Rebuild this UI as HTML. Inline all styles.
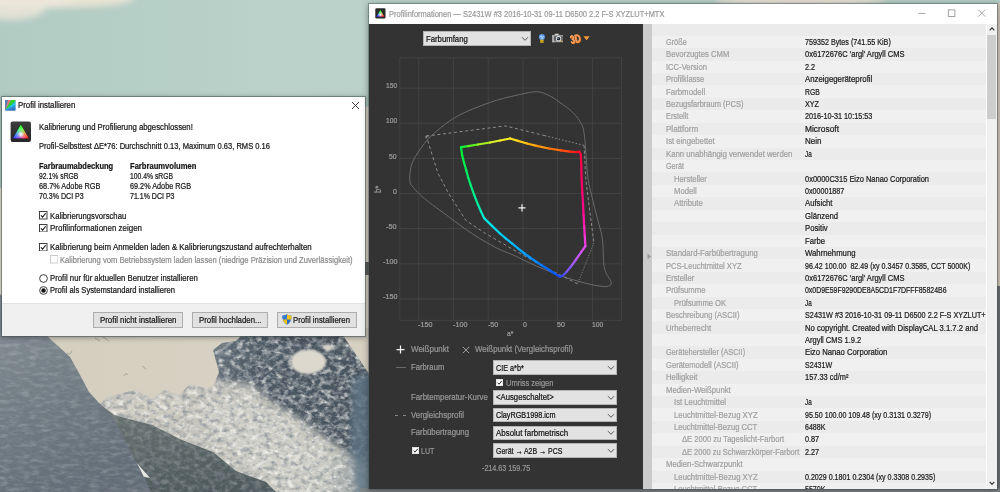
<!DOCTYPE html>
<html lang="de"><head><meta charset="utf-8"><title>Profilinformationen</title>
<style>
html,body{margin:0;padding:0}
body{width:1000px;height:492px;overflow:hidden;position:relative;background:#b4cdc5;font-family:"Liberation Sans", sans-serif;font-size:8.5px}
.a{position:absolute}
.t{position:absolute;white-space:pre;line-height:12px;height:12px;transform-origin:0 0;display:block;-webkit-text-stroke:0.22px currentColor}
svg{position:absolute;display:block}
</style></head><body>
<svg width="1000" height="492" viewBox="0 0 1000 492" style="left:0;top:0">
<defs>
<linearGradient id="sky" x1="0" y1="0" x2="1" y2="0">
 <stop offset="0" stop-color="#b1cbc3"/><stop offset="0.28" stop-color="#bad2c9"/><stop offset="1" stop-color="#b4ccc5"/>
</linearGradient>
<linearGradient id="slope" x1="0" y1="0" x2="0.35" y2="1">
 <stop offset="0" stop-color="#8a939a"/><stop offset="0.45" stop-color="#747f87"/><stop offset="1" stop-color="#626d77"/>
</linearGradient>
<linearGradient id="snow" x1="0" y1="0" x2="1" y2="0">
 <stop offset="0" stop-color="#d3cdbe"/><stop offset="0.5" stop-color="#dcd7c9"/><stop offset="1" stop-color="#dbd5c6"/>
</linearGradient>
<linearGradient id="dmass" x1="0" y1="0" x2="1" y2="0.3">
 <stop offset="0" stop-color="#6d7880"/><stop offset="0.3" stop-color="#4e5a65"/><stop offset="1" stop-color="#45515c"/>
</linearGradient>
<linearGradient id="lows" x1="0" y1="0" x2="0.3" y2="1">
 <stop offset="0" stop-color="#6d7775"/><stop offset="1" stop-color="#4e5a5c"/>
</linearGradient>
<filter id="b1" x="-10%" y="-10%" width="120%" height="120%"><feGaussianBlur stdDeviation="1"/></filter>
<filter id="b2" x="-10%" y="-10%" width="120%" height="120%"><feGaussianBlur stdDeviation="2"/></filter>
<filter id="b3" x="-20%" y="-20%" width="140%" height="140%"><feGaussianBlur stdDeviation="3"/></filter>
<filter id="b6" x="-30%" y="-30%" width="160%" height="160%"><feGaussianBlur stdDeviation="5"/></filter>
<filter id="rockl" x="0" y="0" width="100%" height="100%">
 <feTurbulence type="fractalNoise" baseFrequency="0.16 0.2" numOctaves="3" seed="7" result="n"/>
 <feColorMatrix in="n" type="matrix" values="0 0 0 0 0.93  0 0 0 0 0.92  0 0 0 0 0.88  2.6 0 0 0 -1.15"/>
</filter>
<filter id="rockd" x="0" y="0" width="100%" height="100%">
 <feTurbulence type="fractalNoise" baseFrequency="0.17 0.21" numOctaves="3" seed="3" result="n"/>
 <feColorMatrix in="n" type="matrix" values="0 0 0 0 0.26  0 0 0 0 0.29  0 0 0 0 0.32  0 2.6 0 0 -1.2"/>
</filter>
<filter id="grain" x="0" y="0" width="100%" height="100%">
 <feTurbulence type="fractalNoise" baseFrequency="0.12 0.3" numOctaves="3" seed="11" result="n"/>
 <feColorMatrix in="n" type="matrix" values="0 0 0 0 0.3  0 0 0 0 0.33  0 0 0 0 0.36  0 0 2.2 0 -0.95"/>
</filter>
<filter id="grainl" x="0" y="0" width="100%" height="100%">
 <feTurbulence type="fractalNoise" baseFrequency="0.1 0.25" numOctaves="3" seed="23" result="n"/>
 <feColorMatrix in="n" type="matrix" values="0 0 0 0 0.72  0 0 0 0 0.76  0 0 0 0 0.78  0 2.2 0 0 -0.98"/>
</filter>
<clipPath id="cRock"><path d="M99,404 L108,397 L122,393 L137,390 L152,399 L164,390 L179,395 L190,384 L205,388 L213,386 L219,372 L213,350 L222,343 L236,341 L243,334 L342,334 L372,378 L372,494 L278,494 L266,482 L236,471 L213,452 L182,440 L152,425 L114,415 Z"/></clipPath>
<clipPath id="cSlope"><path d="M0,294 L12,306 L47,336 L58,346 L70,357 L80,375 L89,392 L100,404 L114,419 L125,440 L141,471 L152,494 L0,494 Z"/></clipPath>
<clipPath id="cLow"><path d="M92,398 L114,415 L152,425 L182,440 L213,452 L236,471 L266,482 L278,494 L140,494 L130,471 L116,440 L104,419 Z"/></clipPath>
</defs>
<rect x="0" y="0" width="1000" height="340" fill="url(#sky)"/>
<!-- clouds along the top -->
<g filter="url(#b3)">
 <ellipse cx="40" cy="-2" rx="95" ry="10" fill="#ece6d9"/>
 <ellipse cx="12" cy="7" rx="34" ry="13" fill="#ebe5d8" opacity="0.85"/>
 <ellipse cx="95" cy="2" rx="30" ry="5" fill="#e6e0d2" opacity="0.7"/>
 <ellipse cx="800" cy="0" rx="85" ry="7" fill="#e6e0d3"/>
</g>
<rect x="996" y="3" width="4" height="284" fill="#cfc8b9"/>
<!-- snow field (mostly hidden behind the dialog) -->
<path d="M0,188 L120,150 L370,106 L370,340 L0,340 Z" fill="#e9e3d5"/>
<rect x="365" y="262" width="5" height="13" fill="#62625f"/>
<rect x="0" y="328" width="1000" height="166" fill="url(#snow)"/>
<g stroke="#8b8a80" stroke-width="0.8" fill="none" opacity="0.8"><path d="M95,338 l5,3 M103,337 l6,4 M67,353 q3,3 5,-2 M124,376 q2,-4 4,-1 M142,366 l4,3"/></g>
<!-- right big rock mass -->
<g clip-path="url(#cRock)">
 <rect x="90" y="330" width="290" height="170" fill="#c6c5bd"/>
 <g filter="url(#b3)">
  <path d="M210,349 L236,330 L348,330 L376,374 L376,470 L333,443 L302,420 L270,401 L251,384 L217,381 Z" fill="url(#dmass)"/>
  <path d="M300,470 L340,455 L376,470 L376,496 L310,496 Z" fill="#9aa2a4" opacity="0.6"/>
  <ellipse cx="160" cy="408" rx="50" ry="8" fill="#cfccc1"/>
  <path d="M200,405 L250,398 L300,432 L340,470 L330,496 L290,496 L250,465 L215,440 Z" fill="#d0d0c9" opacity="0.8"/>
 </g>
 <rect x="90" y="330" width="290" height="170" filter="url(#rockl)" opacity="0.8"/>
 <rect x="90" y="330" width="290" height="170" filter="url(#rockd)" opacity="0.85"/>
 <path d="M352,378 L378,372 L378,496 L356,496 L350,440 Z" fill="#5f7484" opacity="0.8" filter="url(#b3)"/>
 <path d="M291,361 C291,353 300,350 309,350 C319,350 326,356 326,362 C326,369 317,374 307,374 C298,374 291,369 291,361 Z" fill="#dcd8cd" filter="url(#b1)"/>
 <path d="M322,346 l8,-2 l3,5 l-6,3 Z" fill="#d6d3c8" filter="url(#b1)"/>
</g>
<path d="M342,332 L374,332 L374,380 Z" fill="#d6d0c1" filter="url(#b1)"/>
<!-- lower dark rocky slope -->
<g clip-path="url(#cLow)">
 <rect x="90" y="395" width="200" height="100" fill="url(#lows)"/>
 <rect x="90" y="395" width="200" height="100" filter="url(#rockl)" opacity="0.22"/>
 <rect x="90" y="395" width="200" height="100" filter="url(#rockd)" opacity="0.55"/>
 <path d="M136,462 L150,478 L141,476 Z" fill="#e8e8e4"/>
</g>
<!-- left blue-grey slope -->
<g clip-path="url(#cSlope)">
 <rect x="0" y="290" width="160" height="208" fill="url(#slope)"/>
 <rect x="0" y="328" width="160" height="170" filter="url(#grain)" opacity="0.3"/>
 <rect x="0" y="328" width="160" height="170" filter="url(#grainl)" opacity="0.25"/>
</g>
<!-- far right strip of mountain + strip under the window -->
<rect x="996" y="286" width="4" height="206" fill="#6b7073"/>
<rect x="360" y="488" width="640" height="4" fill="#7d8587"/>
</svg>
<div class="a" style="left:2px;top:97px;width:363px;height:239px;background:#fff;box-shadow:0 0 0 1px rgba(70,85,88,.55),0 1px 5px 1px rgba(0,0,0,.33)"></div>
<div class="a" style="left:2px;top:303px;width:363px;height:33px;background:#f0f0f0;border-top:1px solid #e2e2e2;box-sizing:border-box"></div>
<svg width="11" height="11" viewBox="0 0 11 11" style="left:4.6px;top:99.8px">
<rect x="0" y="0" width="10.4" height="10.4" fill="#3a86c8"/>
<path d="M0,10.4 L0,0 L3.2,0 Z" fill="#5b7fae"/>
<path d="M0,10.4 L3.2,0 L6,0 Z" fill="#f07a7a"/>
<path d="M0,10.4 L6,0 L10.4,0 L10.4,1.5 Z" fill="#2fd12f"/>
<path d="M0,10.4 L10.4,1.5 L10.4,5.2 Z" fill="#22c3e6"/>
<path d="M0,10.4 L10.4,5.2 L10.4,8 Z" fill="#2a93dc"/>
<path d="M0,10.4 L10.4,8 L10.4,10.4 Z" fill="#2d6fb8"/>
</svg>
<span class="t" style="left:18.30px;top:98.85px;color:#111;font-size:8.5px;transform:scaleX(0.9186);">Profil installieren</span>
<svg width="9" height="9" viewBox="0 0 9 9" style="left:351px;top:100.7px"><path d="M1,1 L8,8 M8,1 L1,8" stroke="#222" stroke-width="0.9" fill="none"/></svg>
<svg width="22" height="22" viewBox="0 0 22 22" style="left:10px;top:121px">
<defs>
<radialGradient id="igR" gradientUnits="userSpaceOnUse" cx="19" cy="17.4" r="17"><stop offset="0" stop-color="#ff0000"/><stop offset="0.3" stop-color="#ff0000"/><stop offset="1" stop-color="#000"/></radialGradient>
<radialGradient id="igG" gradientUnits="userSpaceOnUse" cx="10.8" cy="3.6" r="17"><stop offset="0" stop-color="#00ff00"/><stop offset="0.3" stop-color="#00ff00"/><stop offset="1" stop-color="#000"/></radialGradient>
<radialGradient id="igB" gradientUnits="userSpaceOnUse" cx="2.8" cy="17.4" r="17"><stop offset="0" stop-color="#1020ff"/><stop offset="0.3" stop-color="#1020ff"/><stop offset="1" stop-color="#000"/></radialGradient>
<radialGradient id="igW"><stop offset="0" stop-color="#fff"/><stop offset="1" stop-color="#000"/></radialGradient>
<linearGradient id="ig0" x1="0" y1="0" x2="0" y2="1"><stop offset="0" stop-color="#3c3c3c"/><stop offset="1" stop-color="#262626"/></linearGradient>

</defs>
<rect x="0.6" y="0.4" width="20.4" height="20.6" rx="2.2" fill="url(#ig0)"/>
<g style="isolation:isolate">
<path d="M10.8,3.6 L19,17.4 L2.8,17.4 Z" fill="url(#igR)"/>
<path d="M10.8,3.6 L19,17.4 L2.8,17.4 Z" fill="url(#igG)" style="mix-blend-mode:screen"/>
<path d="M10.8,3.6 L19,17.4 L2.8,17.4 Z" fill="url(#igB)" style="mix-blend-mode:screen"/>
<circle cx="10.9" cy="13.4" r="3.4" fill="url(#igW)" style="mix-blend-mode:screen"/>
</g>
</svg>
<span class="t" style="left:39.20px;top:120.75px;color:#151515;font-size:8.5px;transform:scaleX(0.9117);">Kalibrierung und Profilierung abgeschlossen!</span>
<span class="t" style="left:39.20px;top:139.65px;color:#151515;font-size:8.5px;transform:scaleX(0.8890);">Profil-Selbsttest ΔE*76: Durchschnitt 0.13, Maximum 0.63, RMS 0.16</span>
<span class="t" style="left:39.20px;top:159.55px;color:#151515;font-size:8.5px;transform:scaleX(0.8825);font-weight:700;">Farbraumabdeckung</span>
<span class="t" style="left:129.70px;top:159.55px;color:#151515;font-size:8.5px;transform:scaleX(0.8941);font-weight:700;">Farbraumvolumen</span>
<span class="t" style="left:39.20px;top:169.65px;color:#151515;font-size:8.5px;transform:scaleX(0.8018);">92.1% sRGB</span>
<span class="t" style="left:129.70px;top:169.65px;color:#151515;font-size:8.5px;transform:scaleX(0.8000);">100.4% sRGB</span>
<span class="t" style="left:39.20px;top:179.65px;color:#151515;font-size:8.5px;transform:scaleX(0.8604);">68.7% Adobe RGB</span>
<span class="t" style="left:129.70px;top:179.65px;color:#151515;font-size:8.5px;transform:scaleX(0.8548);">69.2% Adobe RGB</span>
<span class="t" style="left:39.20px;top:189.65px;color:#151515;font-size:8.5px;transform:scaleX(0.8297);">70.3% DCI P3</span>
<span class="t" style="left:129.70px;top:189.65px;color:#151515;font-size:8.5px;transform:scaleX(0.8260);">71.1% DCI P3</span>
<svg width="8.5" height="8.5" viewBox="0 0 10 10" style="left:39.2px;top:211.4px"><rect x="0.6" y="0.6" width="8.8" height="8.8" fill="#fff" stroke="#333" stroke-width="1.1"/><path d="M2.2,5 L4.2,7.2 L7.9,2.6" fill="none" stroke="#111" stroke-width="1.25"/></svg>
<span class="t" style="left:49.80px;top:209.85px;color:#151515;font-size:8.5px;transform:scaleX(0.9060);">Kalibrierungsvorschau</span>
<svg width="8.5" height="8.5" viewBox="0 0 10 10" style="left:39.2px;top:223.7px"><rect x="0.6" y="0.6" width="8.8" height="8.8" fill="#fff" stroke="#333" stroke-width="1.1"/><path d="M2.2,5 L4.2,7.2 L7.9,2.6" fill="none" stroke="#111" stroke-width="1.25"/></svg>
<span class="t" style="left:49.80px;top:222.05px;color:#151515;font-size:8.5px;transform:scaleX(0.9361);">Profilinformationen zeigen</span>
<svg width="8.5" height="8.5" viewBox="0 0 10 10" style="left:39.2px;top:242.5px"><rect x="0.6" y="0.6" width="8.8" height="8.8" fill="#fff" stroke="#333" stroke-width="1.1"/><path d="M2.2,5 L4.2,7.2 L7.9,2.6" fill="none" stroke="#111" stroke-width="1.25"/></svg>
<span class="t" style="left:49.80px;top:241.15px;color:#151515;font-size:8.5px;transform:scaleX(0.9246);">Kalibrierung beim Anmelden laden &amp; Kalibrierungszustand aufrechterhalten</span>
<svg width="8.5" height="8.5" viewBox="0 0 10 10" style="left:49.8px;top:255.1px"><rect x="0.6" y="0.6" width="8.8" height="8.8" fill="#fff" stroke="#c8c8c8" stroke-width="1.1"/></svg>
<span class="t" style="left:60.40px;top:253.55px;color:#8a8a8a;font-size:8.5px;transform:scaleX(0.8989);">Kalibrierung vom Betriebssystem laden lassen (niedrige Präzision und Zuverlässigkeit)</span>
<svg width="9" height="9" viewBox="0 0 10 10" style="left:39px;top:274.3px"><circle cx="5" cy="5" r="4.3" fill="#fff" stroke="#333" stroke-width="1.05"/></svg>
<span class="t" style="left:49.80px;top:271.85px;color:#151515;font-size:8.5px;transform:scaleX(0.9120);">Profil nur für aktuellen Benutzer installieren</span>
<svg width="9" height="9" viewBox="0 0 10 10" style="left:39px;top:286.4px"><circle cx="5" cy="5" r="4.3" fill="#fff" stroke="#333" stroke-width="1.05"/><circle cx="5" cy="5" r="2.5" fill="#111"/></svg>
<span class="t" style="left:49.80px;top:283.95px;color:#151515;font-size:8.5px;transform:scaleX(0.8969);">Profil als Systemstandard installieren</span>
<div class="a" style="left:93px;top:312px;width:90px;height:15.5px;background:#e1e1e1;border:1px solid #adadad;box-sizing:border-box"></div>
<span class="t" style="left:99.50px;top:313.65px;color:#151515;font-size:8.5px;transform:scaleX(0.9252);">Profil nicht installieren</span>
<div class="a" style="left:192px;top:312px;width:75.5px;height:15.5px;background:#e1e1e1;border:1px solid #adadad;box-sizing:border-box"></div>
<span class="t" style="left:198.50px;top:313.65px;color:#151515;font-size:8.5px;transform:scaleX(0.9185);">Profil hochladen...</span>
<div class="a" style="left:276.5px;top:312px;width:80px;height:15.5px;background:#e1e1e1;border:1px solid #adadad;box-sizing:border-box"></div>
<span class="t" style="left:293.00px;top:313.65px;color:#151515;font-size:8.5px;transform:scaleX(0.9138);">Profil installieren</span>
<svg width="10" height="11" viewBox="0 0 10 11" style="left:282px;top:314.4px">
<path d="M5,0.3 C3.6,1.3 2,1.7 0.4,1.7 C0.3,5.6 1.6,8.9 5,10.7 C8.4,8.9 9.7,5.6 9.6,1.7 C8,1.7 6.4,1.3 5,0.3 Z" fill="#2f6fc4"/>
<path d="M5,0.3 C3.6,1.3 2,1.7 0.4,1.7 C0.35,3.1 0.5,4.3 0.9,5.5 L5,5.5 Z" fill="#3a7bd0"/>
<path d="M5,0.3 C6.4,1.3 8,1.7 9.6,1.7 C9.65,3.1 9.5,4.3 9.1,5.5 L5,5.5 Z" fill="#f4c41c"/>
<path d="M0.9,5.5 C1.5,7.6 2.8,9.5 5,10.7 L5,5.5 Z" fill="#f4c41c"/>
</svg>
<div class="a" style="left:369px;top:4px;width:628px;height:485px;background:#fff;box-shadow:0 0 0 1px rgba(70,85,88,.45),0 1px 6px 1px rgba(0,0,0,.33)"></div>
<svg width="11" height="11" viewBox="0 0 22 22" style="left:374.6px;top:7.7px">
<rect x="0.6" y="0.4" width="20.4" height="20.6" rx="2.4" fill="#2a2a2a"/>
<g style="isolation:isolate">
<path d="M10.8,3.6 L19,17.4 L2.8,17.4 Z" fill="url(#igR)"/>
<path d="M10.8,3.6 L19,17.4 L2.8,17.4 Z" fill="url(#igG)" style="mix-blend-mode:screen"/>
<path d="M10.8,3.6 L19,17.4 L2.8,17.4 Z" fill="url(#igB)" style="mix-blend-mode:screen"/>
<circle cx="10.9" cy="13.4" r="3.4" fill="url(#igW)" style="mix-blend-mode:screen"/>
</g>
</svg>
<span class="t" style="left:388.80px;top:7.65px;color:#9a9a9a;font-size:8.5px;transform:scaleX(0.8790);">Profilinformationen — S2431W #3 2016-10-31 09-11 D6500 2.2 F-S XYZLUT+MTX</span>
<svg width="80" height="12" viewBox="0 0 80 12" style="left:915px;top:8px"><g stroke="#8a8a8a" stroke-width="0.8" fill="none"><path d="M3.6,5.4 L10.4,5.4"/><rect x="33.3" y="1.9" width="6.6" height="6.6"/><path d="M63.2,1.6 L70.2,8.6 M70.2,1.6 L63.2,8.6"/></g></svg>
<div class="a" style="left:369px;top:23.5px;width:274px;height:465.5px;background:#333"></div>
<div class="a" style="left:643px;top:23.5px;width:8.5px;height:465.5px;background:#cbcbcb"></div>
<svg width="5" height="7" viewBox="0 0 5 7" style="left:646.8px;top:253px"><path d="M0.5,0.5 L4,3.5 L0.5,6.5 Z" fill="#9a9a9a"/></svg>
<div class="a" style="left:423px;top:31.2px;width:108px;height:15px;background:#e2e2e2;border:1px solid #b4b4b4;box-sizing:border-box"></div><svg width="8" height="6" viewBox="0 0 8 6" style="left:520.8px;top:36.1px"><path d="M1,1.2 L4,4.3 L7,1.2" fill="none" stroke="#444" stroke-width="0.9"/></svg><span class="t" style="left:426.00px;top:32.65px;color:#111;font-size:8.5px;transform:scaleX(0.9110);">Farbumfang</span>
<svg width="8" height="11" viewBox="0 0 8 11" style="left:538px;top:33px">
<circle cx="3.9" cy="4.1" r="3.05" fill="#5b9bea"/>
<path d="M2.3,3.6 q0.8,-1.3 1.6,0 q0.8,1.3 1.6,0" fill="none" stroke="#f4faff" stroke-width="0.9"/>
<path d="M2.6,5.2 h2.6" stroke="#dcecff" stroke-width="0.7"/>
<rect x="2.2" y="6.7" width="3.4" height="3.1" fill="#dcb81e"/><rect x="2.2" y="7.9" width="3.4" height="0.6" fill="#8a6e10"/>
</svg>
<svg width="12" height="10" viewBox="0 0 12 10" style="left:552px;top:33.2px">
<path d="M0.3,2 H2.2 L3,0.6 H6.6 L7.4,2 H10.9 V9.3 H0.3 Z" fill="#9e9e9e"/>
<rect x="0.3" y="3.3" width="10.6" height="4.4" fill="#5e5e5e"/>
<rect x="0.3" y="2" width="1.6" height="7.3" fill="#b8b8b8"/>
<circle cx="6.6" cy="5.7" r="2.7" fill="#e6e6e6"/><circle cx="6.6" cy="5.7" r="1.8" fill="#222"/><circle cx="6.1" cy="5.2" r="0.75" fill="#5aa0ee"/>
<rect x="8.9" y="7.6" width="1.3" height="1.1" fill="#e0a020"/>
<rect x="3.4" y="1" width="2.8" height="0.8" fill="#ddd"/>
</svg>
<span class="t" style="left:571.6px;top:34px;color:#f5924a;font-size:11.5px;font-weight:700;transform:rotate(-13deg) scaleX(0.7);transform-origin:0 100%;text-shadow:-0.5px -0.5px 0 #ffc08a,0.5px 0.6px 0 #c65f14">3D</span>
<svg width="8" height="5" viewBox="0 0 8 5" style="left:583.1px;top:35.6px"><path d="M0.4,0.3 L6.8,0.3 L3.6,4.2 Z" fill="#f59a3c"/></svg>
<svg width="274" height="320" viewBox="369 23.5 274 320" style="left:369px;top:23.5px"><g stroke="#444444" stroke-width="0.9" fill="none"><rect x="399.8" y="57.3" width="221.7" height="262.5"/><path d="M418.7,57.3 V319.8"/><path d="M453.4,57.3 V319.8"/><path d="M488.2,57.3 V319.8"/><path d="M522.9,57.3 V319.8"/><path d="M557.6,57.3 V319.8"/><path d="M592.4,57.3 V319.8"/><path d="M399.8,87.6 H621.5"/><path d="M399.8,122.7 H621.5"/><path d="M399.8,157.9 H621.5"/><path d="M399.8,193.0 H621.5"/><path d="M399.8,228.1 H621.5"/><path d="M399.8,263.3 H621.5"/><path d="M399.8,298.4 H621.5"/></g><path d="M409.8,180.0 C409.6,175.9 409.8,168.6 412.2,162.4 C414.6,156.2 420.3,148.3 424.4,143.0 C428.5,137.7 431.7,134.9 436.6,130.7 C441.5,126.5 447.6,121.5 453.7,117.8 C459.8,114.1 465.9,111.3 473.2,108.3 C480.5,105.2 489.9,101.9 497.6,99.5 C505.3,97.1 513.0,95.5 519.5,94.1 C526.0,92.7 531.7,91.1 536.6,91.2 C541.5,91.3 544.7,93.0 548.8,94.9 C552.9,96.8 556.9,99.8 561.0,102.7 C565.1,105.6 569.8,108.9 573.2,112.4 C576.7,115.9 579.9,120.4 581.7,123.9 C583.5,127.4 583.5,129.6 584.1,133.2 C584.7,136.8 585.0,140.5 585.4,145.4 C585.8,150.3 586.1,156.6 586.6,162.4 C587.1,168.2 587.5,174.7 588.3,180.0 C589.1,185.3 590.0,187.9 591.5,194.4 C593.0,200.9 595.8,211.5 597.6,218.8 C599.4,226.1 601.4,231.0 602.4,238.3 C603.4,245.6 603.1,257.0 603.7,262.7 C604.3,268.4 604.8,269.3 606.0,272.4 C607.2,275.4 610.4,278.9 611.0,281.0 C611.6,283.1 611.2,284.3 609.8,285.1 C608.4,285.9 606.5,286.3 602.4,285.9 C598.3,285.5 592.3,284.4 585.4,282.7 C578.5,280.9 569.1,278.2 561.0,275.4 C552.9,272.5 544.7,269.2 536.6,265.6 C528.5,262.1 518.7,257.0 512.2,254.1 C505.7,251.2 504.1,251.4 497.6,248.0 C491.1,244.6 481.3,239.2 473.2,233.9 C465.1,228.6 456.9,222.3 448.8,216.3 C440.7,210.3 430.3,202.9 424.4,198.0 C418.5,193.1 415.8,190.0 413.4,187.0 C411.0,184.0 410.0,184.1 409.8,180.0 Z" fill="none" stroke="#6a6a6a" stroke-width="1"/><g fill="none" stroke="#8c8c8c" stroke-width="1"><path d="M426.3,135.6 L505.4,125.4 L545,135.2" stroke-dasharray="3 2.6"/><path d="M545,135.2 L584.1,144.9" stroke-dasharray="1.5 2"/><path d="M584.1,144.9 L585.9,180 L593.9,242.4" stroke-dasharray="3 2.2"/><path d="M593.9,242.4 L577.6,283.4" stroke-dasharray="1 1.6"/><path d="M577.6,283.4 L561,274.9 L536.6,262.2 L512.2,248.5 L485.4,232.9 L465.9,220 L448.8,193.2 L437.8,172.4 L426.3,135.6" stroke-dasharray="3.2 2.6"/><path d="M426,138 V135.4 H429" stroke-dasharray="none"/></g><g fill="none" stroke-width="2.25" stroke-linecap="round"><path d="M461.0,146.6 L468.0,145.6" stroke="rgb(30,239,50)"/><path d="M468.0,145.6 L478.0,144.0" stroke="rgb(95,240,35)"/><path d="M478.0,144.0 L490.0,142.0" stroke="rgb(165,240,30)"/><path d="M490.0,142.0 L500.0,140.0" stroke="rgb(220,239,35)"/><path d="M500.0,140.0 L510.2,138.0" stroke="rgb(247,235,40)"/><path d="M510.2,138.0 L518.0,140.3" stroke="rgb(255,223,35)"/><path d="M518.0,140.3 L527.0,143.0" stroke="rgb(255,202,25)"/><path d="M527.0,143.0 L536.6,145.4" stroke="rgb(255,177,15)"/><path d="M536.6,145.4 L549.0,148.0" stroke="rgb(255,147,10)"/><path d="M549.0,148.0 L561.0,149.8" stroke="rgb(255,112,12)"/><path d="M561.0,149.8 L570.0,151.2" stroke="rgb(255,75,17)"/><path d="M570.0,151.2 L576.0,151.6" stroke="rgb(255,40,25)"/><path d="M576.0,151.6 L579.3,151.2" stroke="rgb(255,17,37)"/><path d="M579.3,151.2 L580.8,154.0" stroke="rgb(255,7,52)"/><path d="M580.8,154.0 L581.3,165.0" stroke="rgb(255,2,70)"/><path d="M581.3,165.0 L581.7,180.0" stroke="rgb(255,0,90)"/><path d="M581.7,180.0 L582.3,192.0" stroke="rgb(255,0,107)"/><path d="M582.3,192.0 L582.9,201.7" stroke="rgb(255,2,122)"/><path d="M582.9,201.7 L583.6,215.0" stroke="rgb(255,10,142)"/><path d="M583.6,215.0 L584.2,226.0" stroke="rgb(255,22,167)"/><path d="M584.2,226.0 L584.8,236.0" stroke="rgb(252,40,195)"/><path d="M584.8,236.0 L585.4,245.6" stroke="rgb(242,60,222)"/><path d="M585.4,245.6 L581.0,251.8" stroke="rgb(225,77,240)"/><path d="M581.0,251.8 L576.0,259.0" stroke="rgb(200,87,247)"/><path d="M576.0,259.0 L570.7,266.3" stroke="rgb(167,90,252)"/><path d="M570.7,266.3 L566.0,272.0" stroke="rgb(130,87,255)"/><path d="M566.0,272.0 L562.5,275.3" stroke="rgb(90,80,255)"/><path d="M562.5,275.3 L559.8,276.1" stroke="rgb(50,72,255)"/><path d="M559.8,276.1 L555.0,273.2" stroke="rgb(20,77,255)"/><path d="M555.0,273.2 L548.8,269.3" stroke="rgb(5,92,255)"/><path d="M548.8,269.3 L542.0,265.0" stroke="rgb(0,107,255)"/><path d="M542.0,265.0 L536.6,261.5" stroke="rgb(0,122,255)"/><path d="M536.6,261.5 L530.0,257.0" stroke="rgb(0,137,255)"/><path d="M530.0,257.0 L524.4,253.0" stroke="rgb(0,152,255)"/><path d="M524.4,253.0 L518.0,247.9" stroke="rgb(0,166,255)"/><path d="M518.0,247.9 L512.2,243.2" stroke="rgb(0,178,255)"/><path d="M512.2,243.2 L506.0,238.2" stroke="rgb(0,191,255)"/><path d="M506.0,238.2 L500.0,233.0" stroke="rgb(0,204,252)"/><path d="M500.0,233.0 L492.0,225.4" stroke="rgb(0,216,242)"/><path d="M492.0,225.4 L484.1,217.6" stroke="rgb(0,227,225)"/><path d="M484.1,217.6 L481.0,211.0" stroke="rgb(0,234,202)"/><path d="M481.0,211.0 L478.0,204.1" stroke="rgb(0,237,177)"/><path d="M478.0,204.1 L474.0,194.0" stroke="rgb(0,238,152)"/><path d="M474.0,194.0 L470.7,184.6" stroke="rgb(0,238,127)"/><path d="M470.7,184.6 L468.2,177.0" stroke="rgb(0,238,107)"/><path d="M468.2,177.0 L466.3,170.0" stroke="rgb(0,238,94)"/><path d="M466.3,170.0 L464.0,162.0" stroke="rgb(0,238,81)"/><path d="M464.0,162.0 L462.2,155.0" stroke="rgb(0,238,70)"/><path d="M462.2,155.0 L461.0,146.6" stroke="rgb(0,238,63)"/></g><path d="M518.4,207.3 H525.6 M522,203.7 V210.9" stroke="#f2f2f2" stroke-width="1.2" fill="none"/></svg>
<span class="t" style="left:385.80px;top:80.25px;color:#9e9e9e;font-size:7.6px;transform:scaleX(0.8838);">150</span>
<span class="t" style="left:385.80px;top:115.39px;color:#9e9e9e;font-size:7.6px;transform:scaleX(0.8838);">100</span>
<span class="t" style="left:389.40px;top:150.53px;color:#9e9e9e;font-size:7.6px;transform:scaleX(0.8991);">50</span>
<span class="t" style="left:393.10px;top:185.67px;color:#9e9e9e;font-size:7.6px;transform:scaleX(0.9210);">0</span>
<span class="t" style="left:386.40px;top:220.81px;color:#9e9e9e;font-size:7.6px;transform:scaleX(0.9650);">-50</span>
<span class="t" style="left:382.60px;top:255.95px;color:#9e9e9e;font-size:7.6px;transform:scaleX(0.9472);">-100</span>
<span class="t" style="left:382.60px;top:291.09px;color:#9e9e9e;font-size:7.6px;transform:scaleX(0.9472);">-150</span>
<span class="t" style="left:418.38px;top:319.37px;color:#9e9e9e;font-size:7.6px;transform:scaleX(0.9472);">-150</span>
<span class="t" style="left:453.12px;top:319.37px;color:#9e9e9e;font-size:7.6px;transform:scaleX(0.9472);">-100</span>
<span class="t" style="left:487.86px;top:319.37px;color:#9e9e9e;font-size:7.6px;transform:scaleX(0.9286);">-50</span>
<span class="t" style="left:522.60px;top:319.37px;color:#9e9e9e;font-size:7.6px;transform:scaleX(0.9210);">0</span>
<span class="t" style="left:557.34px;top:319.37px;color:#9e9e9e;font-size:7.6px;transform:scaleX(0.9227);">50</span>
<span class="t" style="left:592.08px;top:319.37px;color:#9e9e9e;font-size:7.6px;transform:scaleX(0.8917);">100</span>
<span class="t" style="left:507.40px;top:327.67px;color:#9e9e9e;font-size:7.6px;transform:scaleX(0.8904);">a*</span>
<span class="t" style="left:371.6px;top:193px;color:#9e9e9e;font-size:8.6px;transform:rotate(-90deg) scaleX(0.9);transform-origin:0 0">b*</span>
<svg width="9" height="9" viewBox="0 0 9 9" style="left:396.3px;top:344.9px"><path d="M0.5,4.5 H8.5 M4.5,0.5 V8.5" stroke="#f4f4f4" stroke-width="1.25" fill="none"/></svg>
<span class="t" style="left:411.10px;top:343.45px;color:#989898;font-size:8.5px;transform:scaleX(0.9386);">Weißpunkt</span>
<svg width="8" height="8" viewBox="0 0 8 8" style="left:461.9px;top:346.1px"><path d="M0.8,0.8 L7.2,7.2 M7.2,0.8 L0.8,7.2" stroke="#b0b0b0" stroke-width="0.85" fill="none"/></svg>
<span class="t" style="left:475.20px;top:343.45px;color:#989898;font-size:8.5px;transform:scaleX(0.9214);">Weißpunkt (Vergleichsprofil)</span>
<div class="a" style="left:395.6px;top:366.7px;width:10.4px;height:1px;background:#6a6a6a"></div>
<span class="t" style="left:411.10px;top:360.85px;color:#989898;font-size:8.5px;transform:scaleX(0.9038);">Farbraum</span>
<div class="a" style="left:492.8px;top:360.3px;width:124.2px;height:14.6px;background:#e2e2e2;border:1px solid #b4b4b4;box-sizing:border-box"></div><svg width="8" height="6" viewBox="0 0 8 6" style="left:606.8px;top:365px"><path d="M1,1.2 L4,4.3 L7,1.2" fill="none" stroke="#444" stroke-width="0.9"/></svg><span class="t" style="left:495.80px;top:361.55px;color:#111;font-size:8.5px;transform:scaleX(0.8525);">CIE a*b*</span>
<svg width="7.3" height="7.3" viewBox="0 0 10 10" style="left:495.8px;top:378.8px"><rect x="0.6" y="0.6" width="8.8" height="8.8" fill="#fff" stroke="#eee" stroke-width="1.1"/><path d="M2.2,5 L4.2,7.2 L7.9,2.6" fill="none" stroke="#111" stroke-width="1.25"/></svg>
<span class="t" style="left:505.60px;top:376.65px;color:#989898;font-size:8.5px;transform:scaleX(0.8801);">Umriss zeigen</span>
<span class="t" style="left:411.10px;top:390.95px;color:#989898;font-size:8.5px;transform:scaleX(0.9184);">Farbtemperatur-Kurve</span>
<div class="a" style="left:492.8px;top:390.2px;width:124.2px;height:14.4px;background:#e2e2e2;border:1px solid #b4b4b4;box-sizing:border-box"></div><svg width="8" height="6" viewBox="0 0 8 6" style="left:606.8px;top:394.8px"><path d="M1,1.2 L4,4.3 L7,1.2" fill="none" stroke="#444" stroke-width="0.9"/></svg><span class="t" style="left:495.80px;top:391.35px;color:#111;font-size:8.5px;transform:scaleX(0.9111);">&lt;Ausgeschaltet&gt;</span>
<div class="a" style="left:395.4px;top:414.5px;width:3px;height:1px;background:#8a8a8a"></div><div class="a" style="left:403px;top:414.5px;width:3px;height:1px;background:#8a8a8a"></div>
<span class="t" style="left:411.10px;top:408.55px;color:#989898;font-size:8.5px;transform:scaleX(0.9212);">Vergleichsprofil</span>
<div class="a" style="left:492.8px;top:407.8px;width:124.2px;height:14.6px;background:#e2e2e2;border:1px solid #b4b4b4;box-sizing:border-box"></div><svg width="8" height="6" viewBox="0 0 8 6" style="left:606.8px;top:412.5px"><path d="M1,1.2 L4,4.3 L7,1.2" fill="none" stroke="#444" stroke-width="0.9"/></svg><span class="t" style="left:495.80px;top:409.05px;color:#111;font-size:8.5px;transform:scaleX(0.8509);">ClayRGB1998.icm</span>
<span class="t" style="left:411.10px;top:426.15px;color:#989898;font-size:8.5px;transform:scaleX(0.9159);">Farbübertragung</span>
<div class="a" style="left:492.8px;top:425.6px;width:124.2px;height:14.6px;background:#e2e2e2;border:1px solid #b4b4b4;box-sizing:border-box"></div><svg width="8" height="6" viewBox="0 0 8 6" style="left:606.8px;top:430.3px"><path d="M1,1.2 L4,4.3 L7,1.2" fill="none" stroke="#444" stroke-width="0.9"/></svg><span class="t" style="left:495.80px;top:426.85px;color:#111;font-size:8.5px;transform:scaleX(0.9318);">Absolut farbmetrisch</span>
<svg width="7.2" height="7.2" viewBox="0 0 10 10" style="left:411.6px;top:447px"><rect x="0.6" y="0.6" width="8.8" height="8.8" fill="#fff" stroke="#eee" stroke-width="1.1"/><path d="M2.2,5 L4.2,7.2 L7.9,2.6" fill="none" stroke="#111" stroke-width="1.25"/></svg>
<span class="t" style="left:421.00px;top:444.65px;color:#989898;font-size:8.5px;transform:scaleX(0.8280);">LUT</span>
<div class="a" style="left:492.8px;top:443.3px;width:124.2px;height:14.6px;background:#e2e2e2;border:1px solid #b4b4b4;box-sizing:border-box"></div><svg width="8" height="6" viewBox="0 0 8 6" style="left:606.8px;top:448px"><path d="M1,1.2 L4,4.3 L7,1.2" fill="none" stroke="#444" stroke-width="0.9"/></svg><span class="t" style="left:495.80px;top:444.55px;color:#111;font-size:8.5px;transform:scaleX(0.8220);">Gerät → A2B → PCS</span>
<span class="t" style="left:482.10px;top:462.05px;color:#989898;font-size:8.5px;transform:scaleX(0.8426);">-214.63 159.75</span>
<div class="a" style="left:651.5px;top:23.5px;width:334.7px;height:465.5px;overflow:hidden;background:#f0f0f0"><div class="a" style="left:0;top:0;width:335px;height:12.30px;background:#ebebeb"></div><div class="a" style="left:0;top:24.72px;width:335px;height:12.42px;background:#ebebeb"></div><div class="a" style="left:0;top:49.56px;width:335px;height:12.42px;background:#ebebeb"></div><div class="a" style="left:0;top:74.40px;width:335px;height:12.42px;background:#ebebeb"></div><div class="a" style="left:0;top:99.24px;width:335px;height:12.42px;background:#ebebeb"></div><div class="a" style="left:0;top:124.08px;width:335px;height:12.42px;background:#ebebeb"></div><div class="a" style="left:0;top:148.92px;width:335px;height:12.42px;background:#ebebeb"></div><div class="a" style="left:0;top:173.76px;width:335px;height:12.42px;background:#ebebeb"></div><div class="a" style="left:0;top:198.60px;width:335px;height:12.42px;background:#ebebeb"></div><div class="a" style="left:0;top:223.44px;width:335px;height:12.42px;background:#ebebeb"></div><div class="a" style="left:0;top:248.28px;width:335px;height:12.42px;background:#ebebeb"></div><div class="a" style="left:0;top:273.12px;width:335px;height:12.42px;background:#ebebeb"></div><div class="a" style="left:0;top:297.96px;width:335px;height:12.42px;background:#ebebeb"></div><div class="a" style="left:0;top:322.80px;width:335px;height:12.42px;background:#ebebeb"></div><div class="a" style="left:0;top:347.64px;width:335px;height:12.42px;background:#ebebeb"></div><div class="a" style="left:0;top:372.48px;width:335px;height:12.42px;background:#ebebeb"></div><div class="a" style="left:0;top:397.32px;width:335px;height:12.42px;background:#ebebeb"></div><div class="a" style="left:0;top:422.16px;width:335px;height:12.42px;background:#ebebeb"></div><div class="a" style="left:0;top:447.00px;width:335px;height:12.42px;background:#ebebeb"></div><span class="t" style="left:14.60px;top:12.45px;color:#a0a0a0;font-size:8.5px;transform:scaleX(0.8591);">Größe</span><span class="t" style="left:153.70px;top:12.45px;color:#1a1a1a;font-size:8.5px;transform:scaleX(0.8445);">759352 Bytes (741.55 KiB)</span><span class="t" style="left:14.60px;top:24.87px;color:#a0a0a0;font-size:8.5px;transform:scaleX(0.9067);">Bevorzugtes CMM</span><span class="t" style="left:153.70px;top:24.87px;color:#1a1a1a;font-size:8.5px;transform:scaleX(0.8853);">0x6172676C &#x27;argl&#x27; Argyll CMS</span><span class="t" style="left:14.60px;top:37.29px;color:#a0a0a0;font-size:8.5px;transform:scaleX(0.8946);">ICC-Version</span><span class="t" style="left:153.70px;top:37.29px;color:#1a1a1a;font-size:8.5px;transform:scaleX(0.8624);">2.2</span><span class="t" style="left:14.60px;top:49.71px;color:#a0a0a0;font-size:8.5px;transform:scaleX(0.8788);">Profilklasse</span><span class="t" style="left:153.70px;top:49.71px;color:#1a1a1a;font-size:8.5px;transform:scaleX(0.9188);">Anzeigegeräteprofil</span><span class="t" style="left:14.60px;top:62.13px;color:#a0a0a0;font-size:8.5px;transform:scaleX(0.9217);">Farbmodell</span><span class="t" style="left:153.70px;top:62.13px;color:#1a1a1a;font-size:8.5px;transform:scaleX(0.8034);">RGB</span><span class="t" style="left:14.60px;top:74.55px;color:#a0a0a0;font-size:8.5px;transform:scaleX(0.8808);">Bezugsfarbraum (PCS)</span><span class="t" style="left:153.70px;top:74.55px;color:#1a1a1a;font-size:8.5px;transform:scaleX(0.8469);">XYZ</span><span class="t" style="left:14.60px;top:86.97px;color:#a0a0a0;font-size:8.5px;transform:scaleX(0.8621);">Erstellt</span><span class="t" style="left:153.70px;top:86.97px;color:#1a1a1a;font-size:8.5px;transform:scaleX(0.8526);">2016-10-31 10:15:53</span><span class="t" style="left:14.60px;top:99.39px;color:#a0a0a0;font-size:8.5px;transform:scaleX(0.9466);">Plattform</span><span class="t" style="left:153.70px;top:99.39px;color:#1a1a1a;font-size:8.5px;transform:scaleX(0.9860);">Microsoft</span><span class="t" style="left:14.60px;top:111.81px;color:#a0a0a0;font-size:8.5px;transform:scaleX(0.9119);">Ist eingebettet</span><span class="t" style="left:153.70px;top:111.81px;color:#1a1a1a;font-size:8.5px;transform:scaleX(0.9437);">Nein</span><span class="t" style="left:14.60px;top:124.23px;color:#a0a0a0;font-size:8.5px;transform:scaleX(0.9128);">Kann unabhängig verwendet werden</span><span class="t" style="left:153.70px;top:124.23px;color:#1a1a1a;font-size:8.5px;transform:scaleX(0.7457);">Ja</span><span class="t" style="left:14.60px;top:136.65px;color:#a0a0a0;font-size:8.5px;transform:scaleX(0.8417);">Gerät</span><span class="t" style="left:22.30px;top:149.07px;color:#a0a0a0;font-size:8.5px;transform:scaleX(0.9045);">Hersteller</span><span class="t" style="left:153.70px;top:149.07px;color:#1a1a1a;font-size:8.5px;transform:scaleX(0.8776);">0x0000C315 Eizo Nanao Corporation</span><span class="t" style="left:22.30px;top:161.49px;color:#a0a0a0;font-size:8.5px;transform:scaleX(0.9050);">Modell</span><span class="t" style="left:153.70px;top:161.49px;color:#1a1a1a;font-size:8.5px;transform:scaleX(0.8390);">0x00001887</span><span class="t" style="left:22.30px;top:173.91px;color:#a0a0a0;font-size:8.5px;transform:scaleX(0.9100);">Attribute</span><span class="t" style="left:153.70px;top:173.91px;color:#1a1a1a;font-size:8.5px;transform:scaleX(0.9088);">Aufsicht</span><span class="t" style="left:153.70px;top:186.33px;color:#1a1a1a;font-size:8.5px;transform:scaleX(0.9088);">Glänzend</span><span class="t" style="left:153.70px;top:198.75px;color:#1a1a1a;font-size:8.5px;transform:scaleX(0.9071);">Positiv</span><span class="t" style="left:153.70px;top:211.17px;color:#1a1a1a;font-size:8.5px;transform:scaleX(0.9020);">Farbe</span><span class="t" style="left:14.60px;top:223.59px;color:#a0a0a0;font-size:8.5px;transform:scaleX(0.9125);">Standard-Farbübertragung</span><span class="t" style="left:153.70px;top:223.59px;color:#1a1a1a;font-size:8.5px;transform:scaleX(0.9118);">Wahrnehmung</span><span class="t" style="left:14.60px;top:236.01px;color:#a0a0a0;font-size:8.5px;transform:scaleX(0.8885);">PCS-Leuchtmittel XYZ</span><span class="t" style="left:153.70px;top:236.01px;color:#1a1a1a;font-size:8.5px;transform:scaleX(0.8354);">96.42 100.00  82.49 (xy 0.3457 0.3585, CCT 5000K)</span><span class="t" style="left:14.60px;top:248.43px;color:#a0a0a0;font-size:8.5px;transform:scaleX(0.9100);">Ersteller</span><span class="t" style="left:153.70px;top:248.43px;color:#1a1a1a;font-size:8.5px;transform:scaleX(0.8853);">0x6172676C &#x27;argl&#x27; Argyll CMS</span><span class="t" style="left:14.60px;top:260.85px;color:#a0a0a0;font-size:8.5px;transform:scaleX(0.9100);">Prüfsumme</span><span class="t" style="left:153.70px;top:260.85px;color:#1a1a1a;font-size:8.5px;transform:scaleX(0.8160);">0x0D9E59F9290DE8A5CD1F7DFFF85824B6</span><span class="t" style="left:22.30px;top:273.27px;color:#a0a0a0;font-size:8.5px;transform:scaleX(0.8975);">Prüfsumme OK</span><span class="t" style="left:153.70px;top:273.27px;color:#1a1a1a;font-size:8.5px;transform:scaleX(0.7457);">Ja</span><span class="t" style="left:14.60px;top:285.69px;color:#a0a0a0;font-size:8.5px;transform:scaleX(0.8930);">Beschreibung (ASCII)</span><span class="t" style="left:153.70px;top:285.69px;color:#1a1a1a;font-size:8.5px;transform:scaleX(0.8547);">S2431W #3 2016-10-31 09-11 D6500 2.2 F-S XYZLUT+MTX</span><span class="t" style="left:14.60px;top:298.11px;color:#a0a0a0;font-size:8.5px;transform:scaleX(0.9125);">Urheberrecht</span><span class="t" style="left:153.70px;top:298.11px;color:#1a1a1a;font-size:8.5px;transform:scaleX(0.9033);">No copyright. Created with DisplayCAL 3.1.7.2 and</span><span class="t" style="left:153.70px;top:310.53px;color:#1a1a1a;font-size:8.5px;transform:scaleX(0.8806);">Argyll CMS 1.9.2</span><span class="t" style="left:14.60px;top:322.95px;color:#a0a0a0;font-size:8.5px;transform:scaleX(0.8676);">Gerätehersteller (ASCII)</span><span class="t" style="left:153.70px;top:322.95px;color:#1a1a1a;font-size:8.5px;transform:scaleX(0.9070);">Eizo Nanao Corporation</span><span class="t" style="left:14.60px;top:335.37px;color:#a0a0a0;font-size:8.5px;transform:scaleX(0.8930);">Gerätemodell (ASCII)</span><span class="t" style="left:153.70px;top:335.37px;color:#1a1a1a;font-size:8.5px;transform:scaleX(0.8300);">S2431W</span><span class="t" style="left:14.60px;top:347.79px;color:#a0a0a0;font-size:8.5px;transform:scaleX(0.9110);">Helligkeit</span><span class="t" style="left:153.70px;top:347.79px;color:#1a1a1a;font-size:8.5px;transform:scaleX(0.8750);">157.33 cd/m²</span><span class="t" style="left:14.60px;top:360.21px;color:#a0a0a0;font-size:8.5px;transform:scaleX(0.9088);">Medien-Weißpunkt</span><span class="t" style="left:22.30px;top:372.63px;color:#a0a0a0;font-size:8.5px;transform:scaleX(0.9088);">Ist Leuchtmittel</span><span class="t" style="left:153.70px;top:372.63px;color:#1a1a1a;font-size:8.5px;transform:scaleX(0.7457);">Ja</span><span class="t" style="left:22.30px;top:385.05px;color:#a0a0a0;font-size:8.5px;transform:scaleX(0.9132);">Leuchtmittel-Bezug XYZ</span><span class="t" style="left:153.70px;top:385.05px;color:#1a1a1a;font-size:8.5px;transform:scaleX(0.8331);">95.50 100.00 109.48 (xy 0.3131 0.3279)</span><span class="t" style="left:22.30px;top:397.47px;color:#a0a0a0;font-size:8.5px;transform:scaleX(0.8995);">Leuchtmittel-Bezug CCT</span><span class="t" style="left:153.70px;top:397.47px;color:#1a1a1a;font-size:8.5px;transform:scaleX(0.8300);">6488K</span><span class="t" style="left:30.00px;top:409.89px;color:#a0a0a0;font-size:8.5px;transform:scaleX(0.8952);">ΔE 2000 zu Tageslicht-Farbort</span><span class="t" style="left:153.70px;top:409.89px;color:#1a1a1a;font-size:8.5px;transform:scaleX(0.8525);">0.87</span><span class="t" style="left:30.00px;top:422.31px;color:#a0a0a0;font-size:8.5px;transform:scaleX(0.8804);">ΔE 2000 zu Schwarzkörper-Farbort</span><span class="t" style="left:153.70px;top:422.31px;color:#1a1a1a;font-size:8.5px;transform:scaleX(0.8525);">2.27</span><span class="t" style="left:14.60px;top:434.73px;color:#a0a0a0;font-size:8.5px;transform:scaleX(0.9105);">Medien-Schwarzpunkt</span><span class="t" style="left:22.30px;top:447.15px;color:#a0a0a0;font-size:8.5px;transform:scaleX(0.9132);">Leuchtmittel-Bezug XYZ</span><span class="t" style="left:153.70px;top:447.15px;color:#1a1a1a;font-size:8.5px;transform:scaleX(0.8354);">0.2029 0.1801 0.2304 (xy 0.3308 0.2935)</span><span class="t" style="left:22.30px;top:459.57px;color:#a0a0a0;font-size:8.5px;transform:scaleX(0.8995);">Leuchtmittel-Bezug CCT</span><span class="t" style="left:153.70px;top:459.57px;color:#1a1a1a;font-size:8.5px;transform:scaleX(0.8300);">5570K</span></div>
<div class="a" style="left:986.8px;top:23.5px;width:10.2px;height:465.5px;background:#f0f0f0"></div>
<div class="a" style="left:987px;top:35px;width:9.4px;height:84px;background:#cdcdcd"></div>
<svg width="6" height="4.3" viewBox="0 0 7 5" style="left:988.7px;top:27.3px"><path d="M0.8,3.9 L3.5,1.1 L6.2,3.9" fill="none" stroke="#333" stroke-width="1.4"/></svg>
<svg width="6" height="4.3" viewBox="0 0 7 5" style="left:988.7px;top:481.3px"><path d="M0.8,1.1 L3.5,3.9 L6.2,1.1" fill="none" stroke="#333" stroke-width="1.4"/></svg>
</body></html>
